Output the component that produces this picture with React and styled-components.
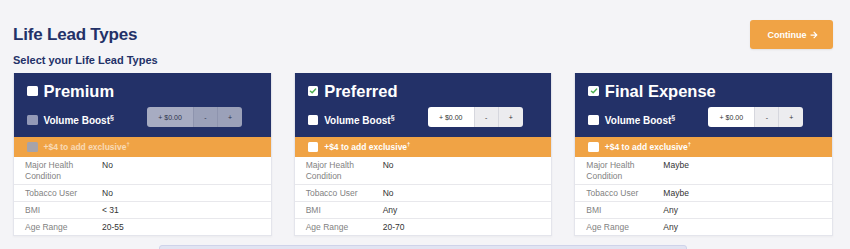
import React from "react";
import styled, { createGlobalStyle } from "styled-components";

const GlobalStyle = createGlobalStyle`
  html, body {
    margin: 0;
    padding: 0;
    background: #f4f4f7;
    font-family: "Liberation Sans", Arial, Helvetica, sans-serif;
  }
`;

//Page wrapper
const Page = styled.div`
  width: 820px;
  padding: 20px 17px 0 13px;
  overflow: hidden;
  height: 229px;
`;

//Top bar with titles and continue button
const TopBar = styled.div`
  display: flex;
  justify-content: space-between;
  align-items: flex-start;
`;

const Title = styled.h1`
  margin: 5px 0 0;
  font-size: 17px;
  line-height: 20px;
  letter-spacing: -0.2px;
  font-weight: 700;
  color: #233168;
`;

const SubTitle = styled.h2`
  margin: 9px 0 0;
  font-size: 11px;
  line-height: 13px;
  font-weight: 700;
  color: #233168;
`;

const ContinueButton = styled.button`
  width: 83px;
  height: 29px;
  border: none;
  border-radius: 3px;
  background: #f0a345;
  color: #fff;
  font-family: inherit;
  font-size: 9px;
  font-weight: 700;
  display: flex;
  align-items: center;
  justify-content: center;
  gap: 3px;
  padding: 0 0 0 2px;
  box-shadow: 0 1px 2px rgba(0, 0, 0, 0.08);
`;

//Row of lead type cards
const CardRow = styled.div`
  display: flex;
  gap: 22px;
  margin-top: 6px;
`;

const Card = styled.div`
  flex: 1;
  background: #fff;
  border: 1px solid #e4e5ec;
  border-top: none;
  box-shadow: 0 1px 2px rgba(0, 0, 0, 0.04);
`;

const CardHeader = styled.div`
  background: #233168;
  padding: 8px 13px 10px 13px;
`;

const NameRow = styled.label`
  display: flex;
  align-items: center;
  gap: 6px;
  height: 20px;
  color: #fff;
  font-size: 16.5px;
  font-weight: 700;
`;

const Box = styled.span`
  width: 10.5px;
  height: 10.5px;
  flex: none;
  border-radius: 1.5px;
  background: ${({ $tone }) => $tone || "#fff"};
  display: flex;
  align-items: center;
  justify-content: center;
`;

const BoostRow = styled.div`
  display: flex;
  align-items: flex-end;
  margin-top: 6px;
`;

const BoostLabel = styled.label`
  width: 120px;
  display: flex;
  align-items: center;
  gap: 6px;
  color: #fff;
  font-size: 10px;
  font-weight: 700;
  height: 12px;
  padding-bottom: 1px;

  sup {
    font-size: 7px;
    line-height: 0;
  }
`;

const ButtonGroup = styled.div`
  display: flex;
  height: 20px;
  border-radius: 3px;
  overflow: hidden;
  opacity: ${({ $dim }) => ($dim ? 0.6 : 1)};
`;

const Segment = styled.div`
  width: ${({ $w }) => $w}px;
  display: flex;
  align-items: center;
  justify-content: center;
  background: ${({ $light }) => ($light ? "#fff" : "#ececef")};
  border-left: ${({ $first }) => ($first ? "none" : "1px solid #d6d7de")};
  color: #333;
  font-size: 7px;
`;

const ExclusiveBand = styled.label`
  height: 20px;
  background: #f0a345;
  display: flex;
  align-items: center;
  gap: 6px;
  padding: 0 13px;

  span.text {
    color: #fff;
    font-size: 8.5px;
    font-weight: 700;
    opacity: ${({ $dim }) => ($dim ? 0.6 : 1)};
  }

  sup {
    font-size: 6px;
    line-height: 0;
  }
`;

const InfoRow = styled.div`
  display: grid;
  grid-template-columns: 77px 1fr;
  padding: 3px 11px 2px;
  line-height: 11px;
  font-size: 8.5px;
  border-top: ${({ $first }) => ($first ? "none" : "1px solid #e8e8ec")};
`;

const InfoLabel = styled.div`
  color: #828282;
`;

const InfoValue = styled.div`
  color: #333;
`;

const BottomBar = styled.div`
  width: 526px;
  height: 12px;
  margin: 9px auto 0;
  background: #e1e4f2;
  border: 1px solid #cfd3ea;
  border-radius: 3px;
`;

const Check = () => (
  <svg width="8" height="8" viewBox="0 0 10 10">
    <path
      d="M1.8 5.2 L4 7.3 L8.3 2.6"
      fill="none"
      stroke="#4caf50"
      strokeWidth="1.8"
      strokeLinecap="round"
      strokeLinejoin="round"
    />
  </svg>
);

const Arrow = () => (
  <svg width="8" height="8" viewBox="0 0 448 512">
    <path
      fill="#fff"
      d="M190.5 66.9l22.2-22.2c9.4-9.4 24.6-9.4 33.9 0L441 239c9.4 9.4 9.4 24.6 0 33.9L246.6 467.3c-9.4 9.4-24.6 9.4-33.9 0l-22.2-22.2c-9.5-9.5-9.3-25 .4-34.3L311.4 296H24c-13.3 0-24-10.7-24-24v-32c0-13.3 10.7-24 24-24h287.4L190.9 101.2c-9.8-9.3-10-24.8-.4-34.3z"
    />
  </svg>
);

const leadTypes = [
  {
    name: "Premium",
    selected: false,
    rows: [
      ["Major Health\nCondition", "No"],
      ["Tobacco User", "No"],
      ["BMI", "< 31"],
      ["Age Range", "20-55"],
    ],
  },
  {
    name: "Preferred",
    selected: true,
    rows: [
      ["Major Health\nCondition", "No"],
      ["Tobacco User", "No"],
      ["BMI", "Any"],
      ["Age Range", "20-70"],
    ],
  },
  {
    name: "Final Expense",
    selected: true,
    rows: [
      ["Major Health\nCondition", "Maybe"],
      ["Tobacco User", "Maybe"],
      ["BMI", "Any"],
      ["Age Range", "Any"],
    ],
  },
];

const LeadCard = ({ type }) => {
  const off = !type.selected;
  return (
    <Card>
      <CardHeader>
        <NameRow>
          <Box>{type.selected && <Check />}</Box>
          {type.name}
        </NameRow>
        <BoostRow>
          <BoostLabel>
            <Box $tone={off ? "#9399b7" : "#fff"} />
            <span>
              Volume Boost<sup>§</sup>
            </span>
          </BoostLabel>
          <ButtonGroup $dim={off}>
            <Segment $w={46} $light $first>
              + $0.00
            </Segment>
            <Segment $w={23}>-</Segment>
            <Segment $w={24}>+</Segment>
          </ButtonGroup>
        </BoostRow>
      </CardHeader>
      <ExclusiveBand $dim={off}>
        <Box $tone={off ? "#a6a3aa" : "#fff"} />
        <span className="text">
          +$4 to add exclusive<sup>†</sup>
        </span>
      </ExclusiveBand>
      {type.rows.map(([label, value], i) => (
        <InfoRow key={label} $first={i === 0}>
          <InfoLabel>
            {label.split("\n").map((line) => (
              <div key={line}>{line}</div>
            ))}
          </InfoLabel>
          <InfoValue>{value}</InfoValue>
        </InfoRow>
      ))}
    </Card>
  );
};

const App = () => {
  return (
    <Page>
      <GlobalStyle />
      <TopBar>
        <div>
          <Title>Life Lead Types</Title>
          <SubTitle>Select your Life Lead Types</SubTitle>
        </div>
        <ContinueButton>
          Continue <Arrow />
        </ContinueButton>
      </TopBar>
      <CardRow>
        {leadTypes.map((type) => (
          <LeadCard key={type.name} type={type} />
        ))}
      </CardRow>
      <BottomBar />
    </Page>
  );
};

export default App;
